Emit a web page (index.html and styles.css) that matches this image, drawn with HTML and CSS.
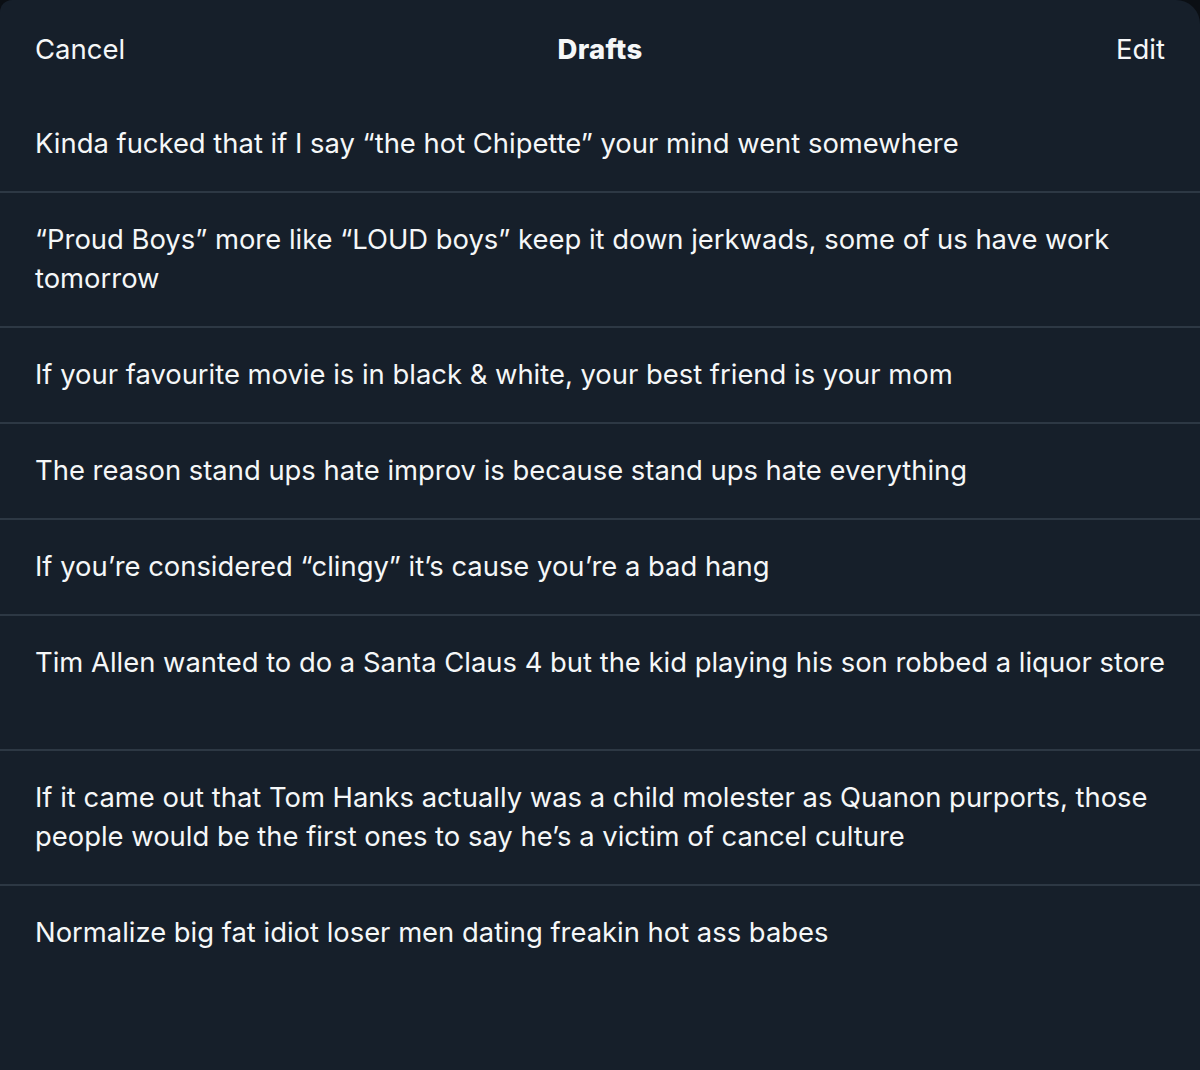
FILE: index.html
```html
<!DOCTYPE html>
<html lang="en">
<head>
<meta charset="utf-8">
<title>Drafts</title>
<link rel="stylesheet" href="styles.css">
</head>
<body>
<div class="sheet">
  <header class="bar">
    <span class="bar-btn">Cancel</span>
    <span class="bar-title">Drafts</span>
    <span class="bar-btn bar-right">Edit</span>
  </header>
  <ul class="drafts">
    <li class="draft">Kinda fucked that if I say “the hot Chipette” your mind went somewhere</li>
    <li class="draft">“Proud Boys” more like “LOUD boys” keep it down jerkwads, some of us have work tomorrow</li>
    <li class="draft">If your favourite movie is in black &amp; white, your best friend is your mom</li>
    <li class="draft">The reason stand ups hate improv is because stand ups hate everything</li>
    <li class="draft">If you’re considered “clingy” it’s cause you’re a bad hang</li>
    <li class="draft two">Tim Allen wanted to do a Santa Claus 4 but the kid playing his son robbed a liquor store</li>
    <li class="draft">If it came out that Tom Hanks actually was a child molester as Quanon purports, those people would be the first ones to say he’s a victim of cancel culture</li>
    <li class="draft last">Normalize big fat idiot loser men dating freakin hot ass babes</li>
  </ul>
</div>
</body>
</html>
```
FILE: styles.css
```css
html, body {
  margin: 0;
  padding: 0;
  background: #0b0f14;
}
body {
  width: 1200px;
  height: 1070px;
  overflow: hidden;
  font-family: Inter, "Liberation Sans", sans-serif;
  color: #f5f7f8;
}
.sheet {
  background: #161f2a;
  height: 1070px;
  border-radius: 12px 24px 0 0;
}
.bar {
  height: 97px;
  display: grid;
  grid-template-columns: 1fr auto 1fr;
  align-items: center;
  padding: 0 35px;
  font-size: 27.5px;
}
.bar-title {
  font-weight: 800;
  letter-spacing: 0.3px;
}
.bar-right {
  justify-self: end;
}
.drafts {
  list-style: none;
  margin: 0;
  padding: 0;
}
.draft {
  padding: 27px 14px 28px 35px;
  font-size: 27.4px;
  line-height: 39px;
  border-bottom: 2px solid #2d3844;
}
.draft.two {
  min-height: 78px;
}
.draft.last {
  border-bottom: none;
}
```
